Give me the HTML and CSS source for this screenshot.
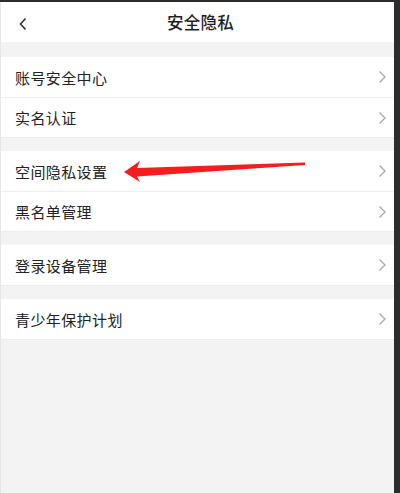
FILE: index.html
```html
<!DOCTYPE html>
<html lang="zh-CN">
<head>
<meta charset="utf-8">
<title>安全隐私</title>
<link rel="stylesheet" href="styles.css">
</head>
<body>
<div class="screen">
  <header class="topbar">
    <svg class="back" width="10" height="14" viewBox="0 0 10 14"><path d="M7.5 1.5 L2.5 7 L7.5 12.5" fill="none" stroke="#333" stroke-width="1.6"/></svg>
    <h1 class="title">安全隐私</h1>
  </header>

  <section class="group">
    <div class="row"><span class="label">账号安全中心</span><svg class="chev" width="9" height="14" viewBox="0 0 9 14"><path d="M1.5 1.5 L7 7 L1.5 12.5" fill="none" stroke="#a8a8a8" stroke-width="1.3"/></svg></div>
    <div class="row"><span class="label">实名认证</span><svg class="chev" width="9" height="14" viewBox="0 0 9 14"><path d="M1.5 1.5 L7 7 L1.5 12.5" fill="none" stroke="#a8a8a8" stroke-width="1.3"/></svg></div>
  </section>

  <section class="group">
    <div class="row marked"><span class="label">空间隐私设置</span><svg class="chev" width="9" height="14" viewBox="0 0 9 14"><path d="M1.5 1.5 L7 7 L1.5 12.5" fill="none" stroke="#a8a8a8" stroke-width="1.3"/></svg>
      <svg class="arrow" width="200" height="30" viewBox="0 0 200 30"><path d="M3 15 L19 4 L16 11 L184 5.5 L184 8 L16 19.5 L19 25 Z" fill="#f51d1d"/></svg>
    </div>
    <div class="row"><span class="label">黑名单管理</span><svg class="chev" width="9" height="14" viewBox="0 0 9 14"><path d="M1.5 1.5 L7 7 L1.5 12.5" fill="none" stroke="#a8a8a8" stroke-width="1.3"/></svg></div>
  </section>

  <section class="group">
    <div class="row"><span class="label">登录设备管理</span><svg class="chev" width="9" height="14" viewBox="0 0 9 14"><path d="M1.5 1.5 L7 7 L1.5 12.5" fill="none" stroke="#a8a8a8" stroke-width="1.3"/></svg></div>
  </section>

  <section class="group">
    <div class="row"><span class="label">青少年保护计划</span><svg class="chev" width="9" height="14" viewBox="0 0 9 14"><path d="M1.5 1.5 L7 7 L1.5 12.5" fill="none" stroke="#a8a8a8" stroke-width="1.3"/></svg></div>
  </section>
</div>
</body>
</html>
```

FILE: styles.css
```css
html, body {
  margin: 0;
  padding: 0;
  background: #2c2c2c;
  height: 493px;
  overflow: hidden;
}
body {
  font-family: "Noto Sans CJK SC", "Noto Sans", sans-serif;
  padding-top: 2px;
}
.screen {
  width: 394px;
  height: 491px;
  background: #f3f3f3;
  box-sizing: border-box;
  border-left: 1px solid #e6e6e6;
  display: flex;
  flex-direction: column;
  gap: 15px;
}
.topbar {
  height: 40px;
  background: #fff;
  display: flex;
  align-items: center;
  justify-content: center;
  position: relative;
}
.back {
  position: absolute;
  left: 17px;
  top: 15px;
}
.title {
  margin: 0 0 0 6px;
  font-size: 16.5px;
  font-weight: 500;
  color: #1f1f1f;
  letter-spacing: 0.2px;
}
.group {
  background: #fff;
  border-bottom: 1px solid #ececec;
  margin-bottom: -1px;
}
.group + .group {
  margin-top: -1px;
}
.row {
  height: 40px;
  display: flex;
  align-items: center;
  justify-content: space-between;
  padding: 0 7px 0 14px;
  position: relative;
}
.row + .row {
  border-top: 1px solid #efefef;
  height: 39px;
}
.label {
  font-size: 15px;
  color: #222;
  letter-spacing: 0.4px;
}
.chev {
  display: block;
}
.arrow {
  position: absolute;
  left: 120px;
  top: 6px;
}
```
